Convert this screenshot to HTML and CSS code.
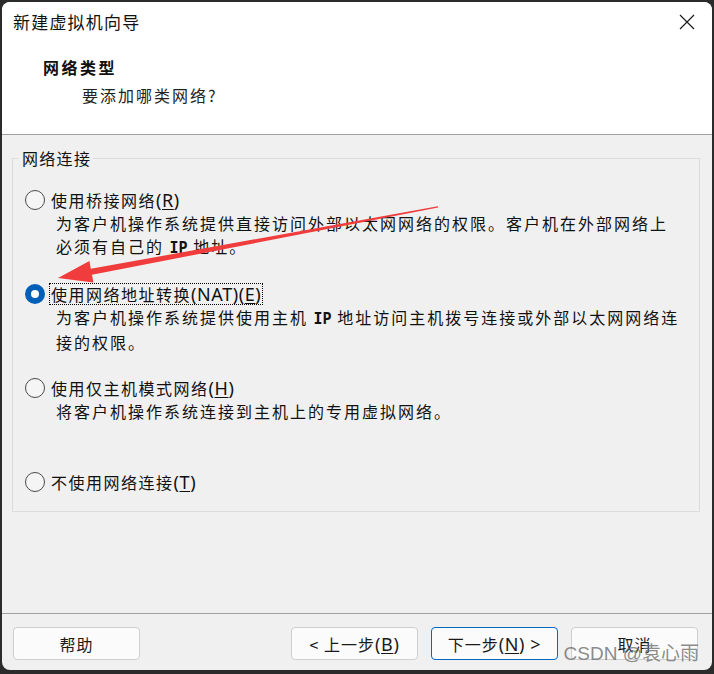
FILE: index.html
```html
<!DOCTYPE html>
<html lang="zh-CN">
<head>
<meta charset="utf-8">
<title>新建虚拟机向导</title>
<link rel="stylesheet" href="styles.css">
</head>
<body>
<div class="window">
  <div class="titlebar">
    <span class="title">新建虚拟机向导</span>
    <svg class="close" width="16" height="16" viewBox="0 0 16 16"><path d="M1 1 L15 15 M15 1 L1 15" stroke="#1a1a1a" stroke-width="1.2" fill="none"/></svg>
  </div>
  <div class="header">
    <div class="h-title">网络类型</div>
    <div class="h-sub">要添加哪类网络?</div>
  </div>
  <div class="content">
    <div class="group">
      <div class="legend">网络连接</div>
      <div class="option">
        <div class="opt-row"><span class="radio"></span><span class="label">使用桥接网络<span class="lat">(<u>R</u>)</span></span></div>
        <div class="desc">为客户机操作系统提供直接访问外部以太网网络的权限。客户机在外部网络上<br>必须有自己的 <b class="ip">IP</b> 地址。</div>
      </div>
      <div class="option">
        <div class="opt-row"><span class="radio checked"></span><span class="label focus">使用网络地址转换<span class="lat">(NAT)(<u>E</u>)</span></span></div>
        <div class="desc">为客户机操作系统提供使用主机 <b class="ip">IP</b> 地址访问主机拨号连接或外部以太网网络连<br>接的权限。</div>
      </div>
      <div class="option">
        <div class="opt-row"><span class="radio"></span><span class="label">使用仅主机模式网络<span class="lat">(<u>H</u>)</span></span></div>
        <div class="desc">将客户机操作系统连接到主机上的专用虚拟网络。</div>
      </div>
      <div class="option">
        <div class="opt-row"><span class="radio"></span><span class="label">不使用网络连接<span class="lat">(<u>T</u>)</span></span></div>
      </div>
    </div>
  </div>
  <div class="footer">
    <button class="btn">帮助</button>
    <div class="btn-group">
      <button class="btn">&lt; 上一步<span class="lat">(<u>B</u>)</span></button>
      <button class="btn primary">下一步<span class="lat">(<u>N</u>) &gt;</span></button>
      <button class="btn">取消</button>
    </div>
  </div>
</div>
<div class="watermark">CSDN @袁心雨</div>
<svg class="arrow" width="714" height="674" viewBox="0 0 714 674">
  <polygon points="437.8,206.3 90.8,268.8 89.4,260.9 58,278 93.4,282.6 92.0,274.7 438.2,207.6" fill="#f03c3c"/>
</svg>
</body>
</html>
```
FILE: styles.css
```css
html, body {
  margin: 0;
  padding: 0;
}
body {
  background: #2b2b2b;
  width: 714px;
  height: 674px;
  position: relative;
  overflow: hidden;
  font-family: "Noto Sans CJK SC", "Noto Sans", sans-serif;
  color: #111;
}
.window {
  position: absolute;
  left: 2px;
  top: 2px;
  width: 710px;
  height: 668px;
  border-radius: 8px;
  overflow: hidden;
  background: #f0f0f0;
  display: flex;
  flex-direction: column;
}
.titlebar {
  height: 40px;
  flex: none;
  background: #fff;
  display: flex;
  align-items: center;
  justify-content: space-between;
  padding: 0 17px 0 11px;
}
.title {
  font-size: 17px;
  letter-spacing: 1.2px;
  line-height: 24px;
}
.close {
  display: block;
}
.header {
  height: 79px;
  flex: none;
  background: #fff;
  border-bottom: 1px solid #a0a0a0;
  padding: 13px 0 0 41px;
}
.h-title {
  font-size: 16px;
  font-weight: bold;
  letter-spacing: 2.5px;
  line-height: 24px;
}
.h-sub {
  font-size: 16px;
  letter-spacing: 2px;
  line-height: 24px;
  margin-top: 4px;
  margin-left: 39px;
  color: #222;
}
.content {
  height: 478px;
  flex: none;
  padding: 23px 0 0 10px;
  box-sizing: border-box;
}
.group {
  position: relative;
  width: 688px;
  height: 354px;
  box-sizing: border-box;
  border: 1px solid #dcdcdc;
  padding: 29px 0 0 12px;
}
.legend {
  position: absolute;
  top: -11px;
  left: 5px;
  padding: 0 2px 0 4px;
  background: #f0f0f0;
  font-size: 16px;
  letter-spacing: 1.3px;
  line-height: 20px;
}
.option {
  height: 94px;
}
.opt-row {
  height: 24px;
  display: flex;
  align-items: center;
}
.radio {
  width: 20px;
  height: 20px;
  box-sizing: border-box;
  border: 1px solid #4a4a4a;
  border-radius: 50%;
  background: #f5f5f5;
  flex: none;
  position: relative;
}
.radio.checked {
  border: none;
  background: #005fb8;
}
.radio.checked::after {
  content: "";
  position: absolute;
  left: 6px;
  top: 6px;
  width: 8px;
  height: 8px;
  border-radius: 50%;
  background: #fff;
}
.label {
  margin-left: 4px;
  padding: 0 1px;
  border: 1px solid transparent;
  font-size: 16px;
  letter-spacing: 1.5px;
  line-height: 20px;
  white-space: nowrap;
}
.label.focus {
  border: 1px dotted #000;
}
.lat {
  font-family: "Noto Sans", "Noto Sans CJK SC", sans-serif;
  font-size: 18px;
  letter-spacing: 0.6px;
}
u {
  text-decoration: underline;
  text-underline-offset: 2px;
}
.desc {
  padding-left: 31px;
  font-size: 16px;
  letter-spacing: 2px;
  line-height: 23px;
  white-space: nowrap;
}
.ip {
  font-family: "DejaVu Sans Mono", monospace;
  font-size: 15px;
  letter-spacing: 0;
}
.footer {
  flex: none;
  height: 57px;
  box-sizing: border-box;
  border-top: 1px solid #a0a0a0;
  padding: 13px 14px 0 11px;
  display: flex;
  align-items: flex-start;
}
.btn-group {
  margin-left: auto;
  display: flex;
  gap: 13px;
}
.btn {
  width: 127px;
  height: 33px;
  box-sizing: border-box;
  border: 1px solid #cfcfcf;
  border-radius: 4px;
  background: #fbfbfb;
  font-family: "Noto Sans CJK SC", "Noto Sans", sans-serif;
  font-size: 16px;
  letter-spacing: 1px;
  color: #1a1a1a;
  padding: 0;
  line-height: 20px;
}
.btn.primary {
  border-color: #0067c0;
}
.watermark {
  position: absolute;
  right: 15px;
  top: 642px;
  font-family: "Liberation Sans", "Noto Sans CJK SC", sans-serif;
  font-size: 19px;
  line-height: 24px;
  color: rgba(110, 110, 110, 0.8);
  white-space: nowrap;
}
.arrow {
  position: absolute;
  left: 0;
  top: 0;
  pointer-events: none;
}
```
